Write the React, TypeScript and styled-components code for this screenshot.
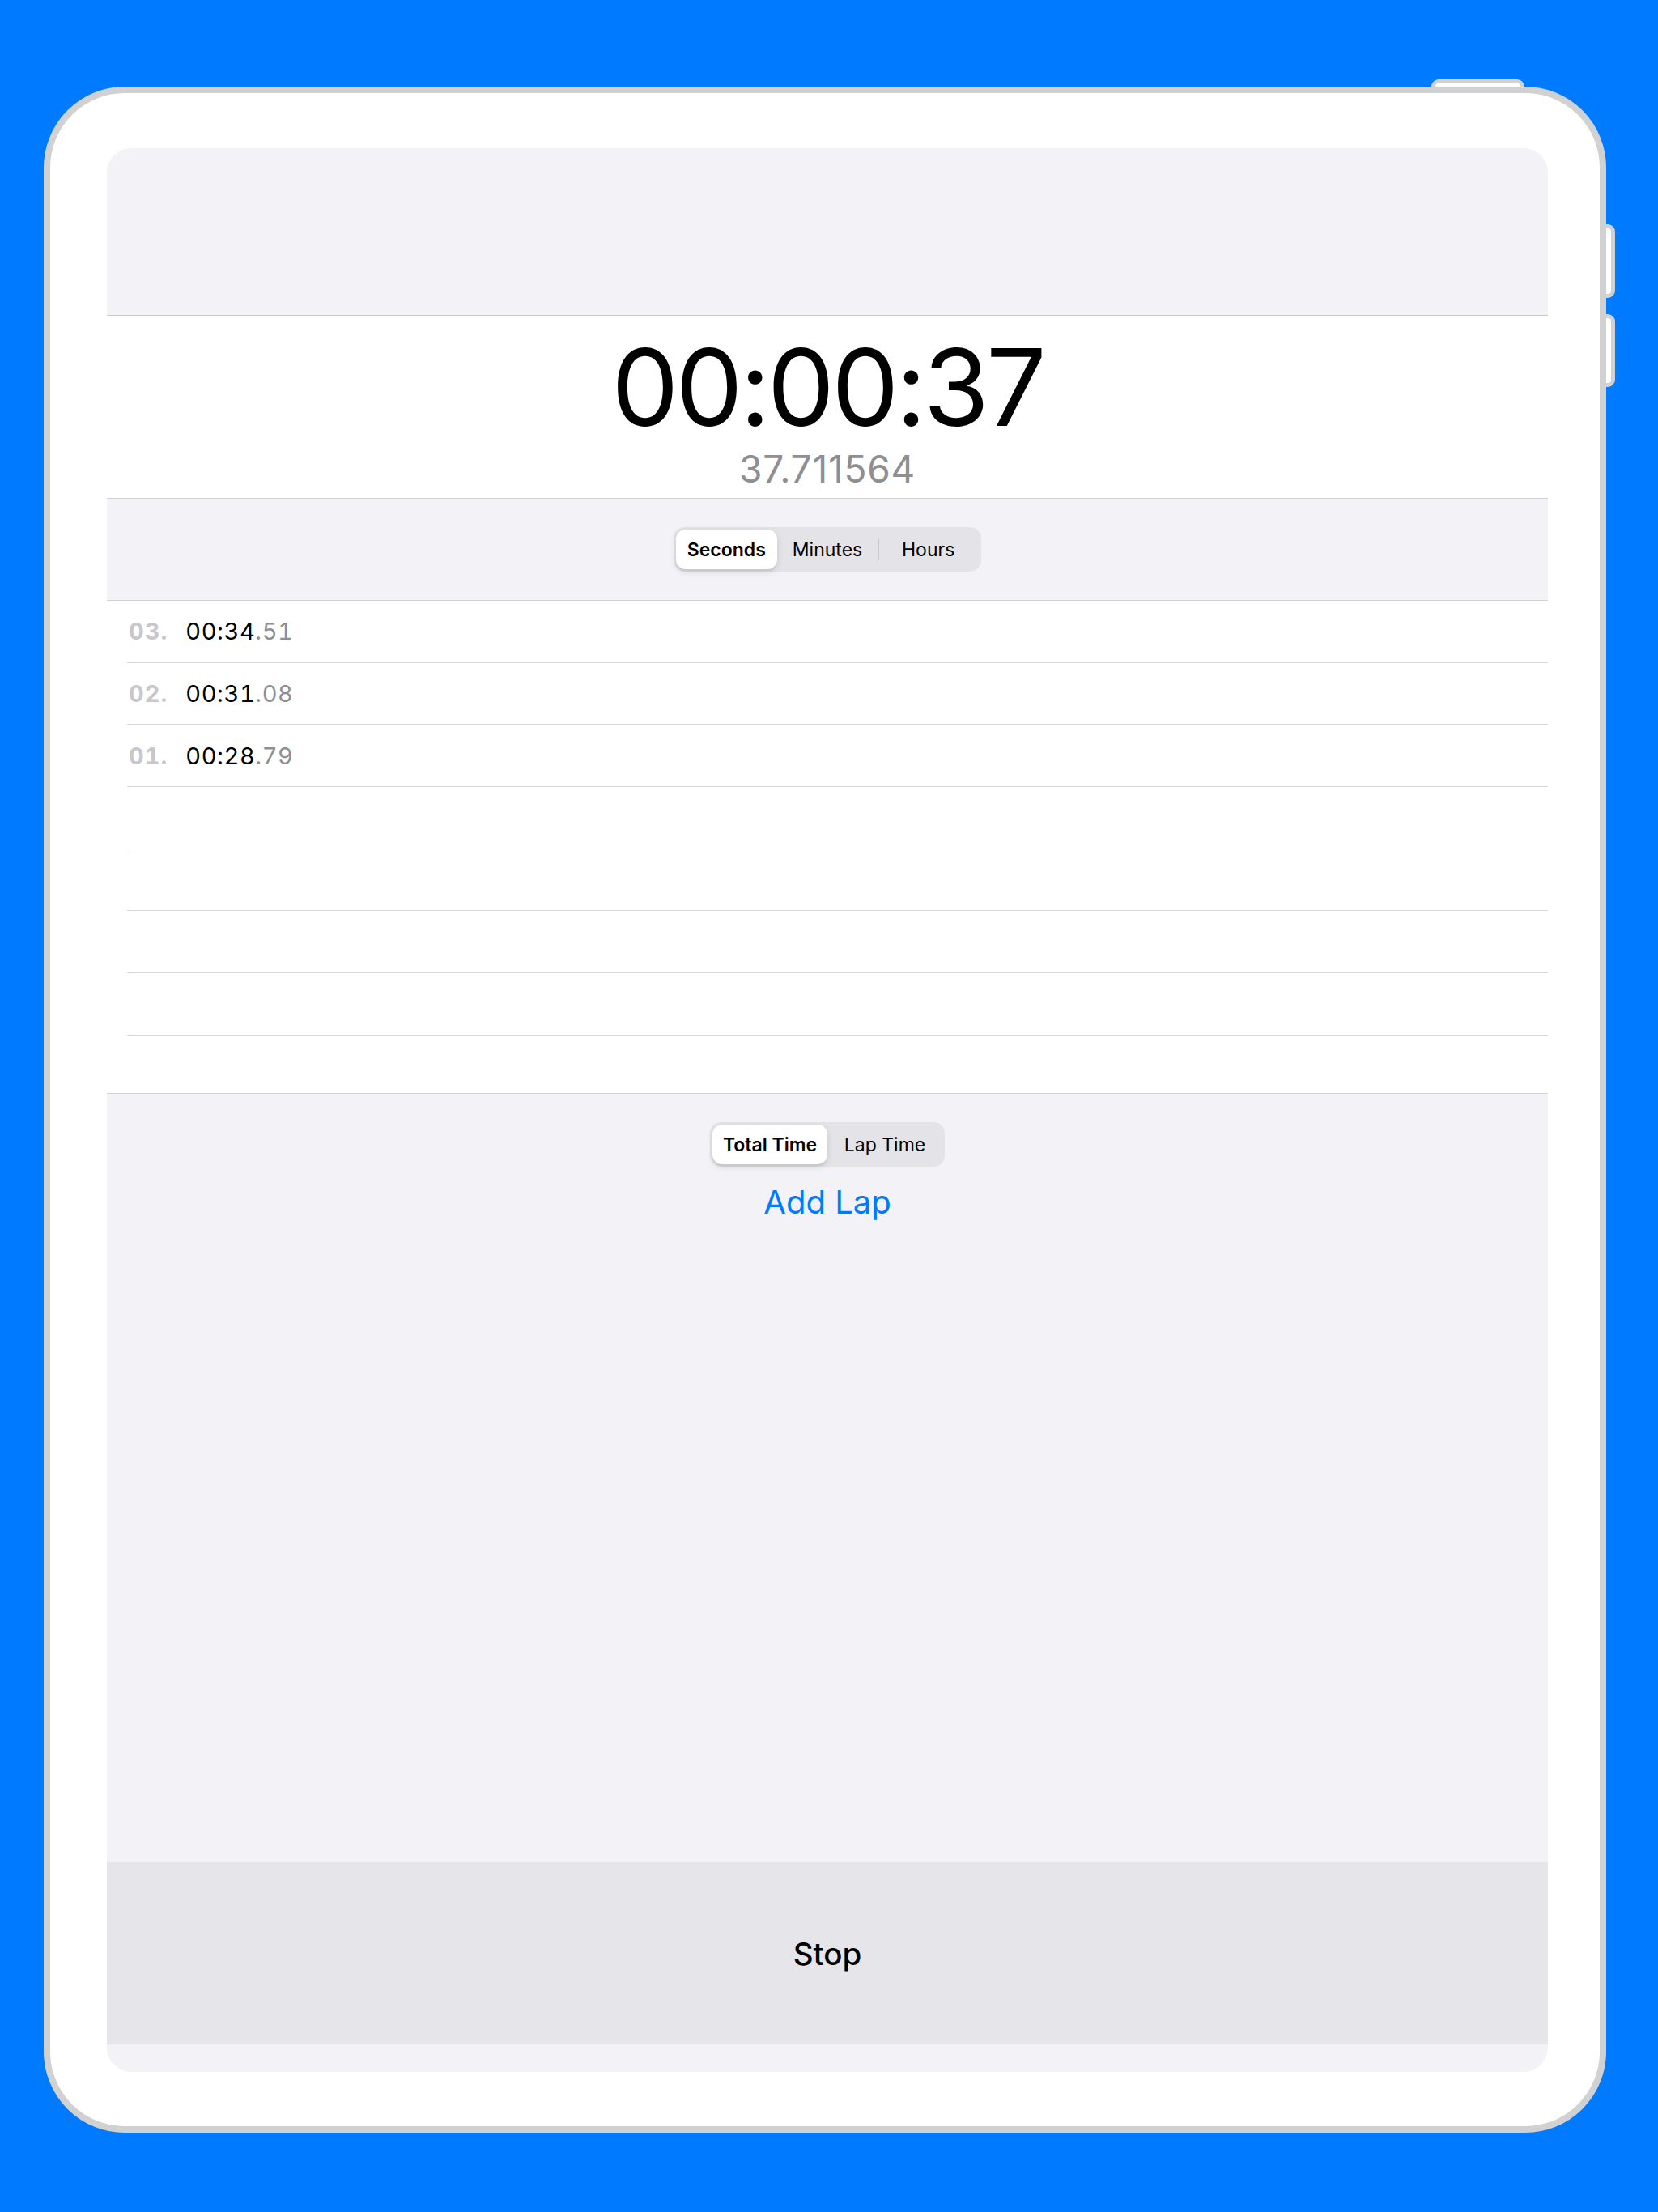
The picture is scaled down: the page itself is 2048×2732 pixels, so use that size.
import React from "react";
import styled, { createGlobalStyle, css } from "styled-components";

const GlobalStyle = createGlobalStyle`
  html, body { margin: 0; padding: 0; background: #007aff; }
  body { font-family: Inter, "Noto Sans", "Liberation Sans", sans-serif; -webkit-font-smoothing: antialiased; }
  * { box-sizing: border-box; }
`;

const Page = styled.div`
  width: 2048px;
  height: 2732px;
  padding: 107px 0 0 54px;
  background: #007aff;
`;

const DeviceWrap = styled.div`
  position: relative;
  width: 1930px;
  height: 2527px;
`;

const HardwareButton = styled.div<{ $side: "top" | "right"; $offset: number; $length: number }>`
  position: absolute;
  z-index: 0;
  background: #ffffff;
  border: 5px solid #d1d1d1;
  border-radius: 9px;
  ${(p) =>
    p.$side === "top"
      ? css`
          top: -9px;
          left: ${p.$offset}px;
          width: ${p.$length}px;
          height: 30px;
        `
      : css`
          right: -11px;
          top: ${p.$offset}px;
          width: 30px;
          height: ${p.$length}px;
        `}
`;

const Device = styled.div`
  position: relative;
  z-index: 1;
  width: 100%;
  height: 100%;
  display: flex;
  border: 8px solid #d1d1d1;
  border-radius: 100px;
  background: #ffffff;
  padding: 68px 64px 67px 70px;
`;

const Screen = styled.div`
  flex: 1;
  display: flex;
  flex-direction: column;
  background: #f2f2f7;
  border-radius: 30px;
  overflow: hidden;
`;

const NavArea = styled.div`
  height: 207px;
  flex-shrink: 0;
  border-bottom: 1px solid #c8c8cc;
`;

const TimeSection = styled.div`
  height: 226px;
  flex-shrink: 0;
  background: #ffffff;
  border-bottom: 1px solid #d1d1d6;
  display: flex;
  flex-direction: column;
  align-items: center;
  padding-top: 29px;
`;

const BigTime = styled.div`
  font-size: 132px;
  line-height: 118px;
  font-weight: 400;
  color: #000000;
  letter-spacing: -4px;
`;

const SubTime = styled.div`
  margin-top: 19px;
  font-size: 46px;
  line-height: 1;
  color: #8e8e93;
  letter-spacing: 0.8px;
`;

const SegmentBand = styled.div`
  height: 126px;
  flex-shrink: 0;
  border-bottom: 1px solid #d1d1d6;
  display: flex;
  justify-content: center;
  align-items: center;
`;

const Segmented = styled.div<{ $segWidth: number }>`
  display: grid;
  grid-auto-flow: column;
  grid-auto-columns: ${(p) => p.$segWidth}px;
  height: 55px;
  padding: 3px;
  border-radius: 14px;
  background: #e3e3e8;
`;

const Segment = styled.div<{ $selected?: boolean; $divider?: boolean }>`
  position: relative;
  display: flex;
  align-items: center;
  justify-content: center;
  font-size: 23px;
  font-weight: ${(p) => (p.$selected ? 600 : 400)};
  color: #000000;
  border-radius: 12px;
  ${(p) =>
    p.$selected &&
    css`
      background: #ffffff;
      box-shadow: 0 3px 8px rgba(0, 0, 0, 0.12), 0 3px 1px rgba(0, 0, 0, 0.04);
    `}
  ${(p) =>
    p.$divider &&
    css`
      &::before {
        content: "";
        position: absolute;
        left: 0;
        top: 11px;
        bottom: 11px;
        width: 2px;
        background: #c9c9ce;
        border-radius: 1px;
      }
    `}
`;

const LapList = styled.div`
  height: 609px;
  flex-shrink: 0;
  background: #ffffff;
  border-bottom: 1px solid #d1d1d6;
  overflow: hidden;
`;

const LapRow = styled.div<{ $last?: boolean }>`
  height: 76.67px;
  margin-left: 25px;
  display: flex;
  align-items: center;
  gap: 22px;
  border-bottom: ${(p) => (p.$last ? "none" : "1px solid #d6d6da")};
  font-size: 29px;
  font-feature-settings: "tnum" 1;
`;

const LapIndex = styled.span`
  font-weight: 700;
  color: #c7c7cc;
  letter-spacing: 1px;
  padding-left: 2px;
`;

const LapTime = styled.span`
  color: #000000;
  letter-spacing: 0.6px;
`;

const LapFraction = styled.span`
  color: #8e8e93;
`;

const BottomArea = styled.div`
  flex: 1;
  display: flex;
  flex-direction: column;
  align-items: center;
  padding-top: 35px;
`;

const AddLap = styled.button`
  margin-top: 24px;
  border: none;
  background: none;
  padding: 0;
  font-family: inherit;
  font-size: 40px;
  line-height: 1;
  color: #007aff;
  cursor: pointer;
`;

const StopBar = styled.button`
  height: 225px;
  flex-shrink: 0;
  border: none;
  background: #e5e5ea;
  font-family: inherit;
  font-size: 38.5px;
  font-weight: 500;
  color: #000000;
  display: flex;
  align-items: center;
  justify-content: center;
`;

const SafeArea = styled.div`
  height: 34px;
  flex-shrink: 0;
`;

const laps = [
  { n: "03.", main: "00:34", frac: ".51" },
  { n: "02.", main: "00:31", frac: ".08" },
  { n: "01.", main: "00:28", frac: ".79" },
];

export default function App() {
  const emptyRows = 5;
  return (
    <>
      <GlobalStyle />
      <Page>
        <DeviceWrap>
          <HardwareButton $side="top" $offset={1714} $length={115} />
          <HardwareButton $side="right" $offset={170} $length={91} />
          <HardwareButton $side="right" $offset={281} $length={90} />
          <Device>
            <Screen>
              <NavArea />
              <TimeSection>
                <BigTime>00:00:37</BigTime>
                <SubTime>37.711564</SubTime>
              </TimeSection>
              <SegmentBand>
                <Segmented $segWidth={124.7}>
                  <Segment $selected>Seconds</Segment>
                  <Segment>Minutes</Segment>
                  <Segment $divider>Hours</Segment>
                </Segmented>
              </SegmentBand>
              <LapList>
                {laps.map((l) => (
                  <LapRow key={l.n}>
                    <LapIndex>{l.n}</LapIndex>
                    <LapTime>
                      {l.main}
                      <LapFraction>{l.frac}</LapFraction>
                    </LapTime>
                  </LapRow>
                ))}
                {Array.from({ length: emptyRows }).map((_, i) => (
                  <LapRow key={i} $last={i === emptyRows - 1} />
                ))}
              </LapList>
              <BottomArea>
                <Segmented $segWidth={142}>
                  <Segment $selected>Total Time</Segment>
                  <Segment>Lap Time</Segment>
                </Segmented>
                <AddLap>Add Lap</AddLap>
              </BottomArea>
              <StopBar>Stop</StopBar>
              <SafeArea />
            </Screen>
          </Device>
        </DeviceWrap>
      </Page>
    </>
  );
}
